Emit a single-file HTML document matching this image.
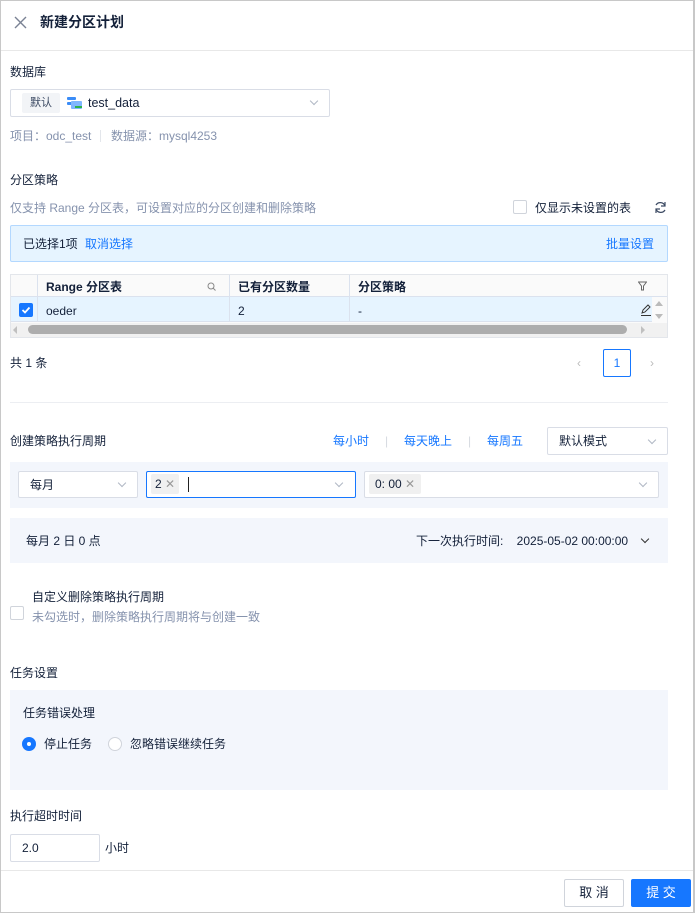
<!DOCTYPE html>
<html><head><meta charset="utf-8"><style>
*{box-sizing:border-box;margin:0;padding:0}
body{width:695px;height:913px;position:relative;background:#fff;font-family:"Liberation Sans","Noto Sans CJK SC",sans-serif;font-size:12px;color:#132039;overflow:hidden}
.a{position:absolute;white-space:nowrap;line-height:16px}
.g{color:#8592ad}
.b{color:#1677ff}
.box{position:absolute;border:1px solid #d9dde6;background:#fff;border-radius:2px}
.chev{position:absolute;width:6px;height:6px;border-right:1px solid #b0b7c4;border-bottom:1px solid #b0b7c4;transform:rotate(45deg)}
.tag{position:absolute;background:#f0f0f0;border-radius:2px;padding:0 4px;line-height:20px;height:20px}
</style></head><body>
<div style="position:absolute;inset:0;border:1px solid #c8c8c8;border-right:2px solid #c8c8c8;pointer-events:none;z-index:9"></div>
<svg class="a" style="left:14px;top:16px" width="13" height="13" viewBox="0 0 13 13"><path d="M1 1L12 12M12 1L1 12" stroke="#7a8294" stroke-width="1.4"/></svg>
<div class="a" style="left:40px;top:14px;font-size:14px;font-weight:bold">新建分区计划</div>
<div style="position:absolute;left:0;top:50px;width:695px;border-top:1px solid #e8e8e8"></div>

<div class="a" style="left:10px;top:64px">数据库</div>
<div class="box" style="left:10px;top:89px;width:320px;height:28px"></div>
<div class="tag" style="left:22px;top:93px;background:#f2f4f7;color:#3c4a63;font-size:11px;padding:0 8px">默认</div>
<svg class="a" style="left:67px;top:96px" width="16" height="14" viewBox="0 0 16 14"><rect x="0" y="1" width="9" height="3" rx="1" fill="#3b8cf7"/><rect x="0" y="6" width="6" height="3" rx="1" fill="#3b8cf7"/><rect x="4" y="5" width="11" height="8" rx="1" fill="#7fb6ff"/><rect x="8" y="10" width="7" height="2" fill="#2bb24c"/></svg>
<div class="a" style="left:88px;top:95px;font-size:12.5px">test_data</div>
<div class="chev" style="left:311px;top:98px"></div>
<div class="a g" style="left:10px;top:128px">项目：odc_test</div>
<div style="position:absolute;left:100px;top:130px;height:12px;border-left:1px solid #e3e6eb"></div>
<div class="a g" style="left:111px;top:128px">数据源：mysql4253</div>

<div class="a" style="left:10px;top:172px">分区策略</div>
<div class="a g" style="left:10px;top:200px">仅支持 Range 分区表，可设置对应的分区创建和删除策略</div>
<div style="position:absolute;left:513px;top:200px;width:14px;height:14px;border:1px solid #d0d4db;border-radius:2px"></div>
<div class="a" style="left:535px;top:200px">仅显示未设置的表</div>
<svg class="a" style="left:654px;top:201px" width="13" height="13" viewBox="0 0 13 13"><path d="M11 5A5 5 0 0 0 2 4M2 8A5 5 0 0 0 11 9" fill="none" stroke="#3c4a63" stroke-width="1.2"/><path d="M11 1V5H7M2 12V8H6" fill="none" stroke="#3c4a63" stroke-width="1.2"/></svg>

<div style="position:absolute;left:10px;top:225px;width:658px;height:37px;background:#e6f4ff;border:1px solid #b3d8ff;border-radius:2px"></div>
<div class="a" style="left:23px;top:236px">已选择1项</div>
<div class="a b" style="left:85px;top:236px">取消选择</div>
<div class="a b" style="left:606px;top:236px">批量设置</div>

<div style="position:absolute;left:10px;top:274px;width:658px;height:64px;border:1px solid #e3e6eb;background:#fafafa"></div>
<div style="position:absolute;left:11px;top:275px;width:656px;height:22px;background:#fafafa;border-bottom:1px solid #dbe2ee"></div>
<div style="position:absolute;left:11px;top:297px;width:641px;height:25px;background:#e6f4ff;border-bottom:1px solid #dbe2ee"></div>
<div style="position:absolute;left:37px;top:275px;height:47px;border-left:1px solid #dbe2ee"></div>
<div style="position:absolute;left:229px;top:275px;height:47px;border-left:1px solid #dbe2ee"></div>
<div style="position:absolute;left:349px;top:275px;height:47px;border-left:1px solid #dbe2ee"></div>
<div class="a" style="left:46px;top:279px;font-weight:bold">Range 分区表</div>
<svg class="a" style="left:207px;top:282px" width="9" height="9" viewBox="0 0 9 9"><circle cx="4" cy="4" r="3" fill="none" stroke="#888" stroke-width="1"/><path d="M6 6L8.5 8.5" stroke="#888"/></svg>
<div class="a" style="left:238px;top:279px;font-weight:bold">已有分区数量</div>
<div class="a" style="left:358px;top:279px;font-weight:bold">分区策略</div>
<svg class="a" style="left:638px;top:281px" width="9" height="10" viewBox="0 0 9 10"><path d="M0.5 1H8.5L5.5 5V9H3.5V5Z" fill="none" stroke="#666"/></svg>
<div style="position:absolute;left:19px;top:303px;width:14px;height:14px;background:#1677ff;border-radius:2px"></div>
<svg class="a" style="left:19px;top:303px" width="14" height="14" viewBox="0 0 14 14"><path d="M3.5 7L6 9.5L10.5 4.5" fill="none" stroke="#fff" stroke-width="1.8"/></svg>
<div class="a" style="left:46px;top:303px">oeder</div>
<div class="a" style="left:238px;top:303px">2</div>
<div class="a" style="left:358px;top:303px">-</div>
<svg class="a" style="left:640px;top:304px" width="12" height="12" viewBox="0 0 12 12"><path d="M2 9L3 6L8 1L10 3L5 8Z" fill="none" stroke="#333"/><path d="M1 11.5H11" stroke="#333"/></svg>
<div style="position:absolute;left:655px;top:301px;border:4px solid transparent;border-bottom:5px solid #bbb;border-top:0"></div>
<div style="position:absolute;left:655px;top:314px;border:4px solid transparent;border-top:5px solid #bbb;border-bottom:0"></div>
<div style="position:absolute;left:11px;top:323px;width:656px;height:14px;background:#f1f1f1"></div>
<div style="position:absolute;left:13px;top:326px;border:4px solid transparent;border-right:4px solid #c0c0c0;border-left:0"></div>
<div style="position:absolute;left:641px;top:326px;border:4px solid transparent;border-left:4px solid #c0c0c0;border-right:0"></div>
<div style="position:absolute;left:28px;top:325px;width:599px;height:9px;border-radius:5px;background:#adadad"></div>

<div class="a" style="left:10px;top:355px">共 1 条</div>
<div class="a" style="left:577px;top:355px;color:#bbb">‹</div>
<div style="position:absolute;left:603px;top:349px;width:28px;height:28px;border:1px solid #1677ff;border-radius:2px;color:#1677ff;text-align:center;line-height:26px">1</div>
<div class="a" style="left:650px;top:355px;color:#bbb">›</div>
<div style="position:absolute;left:10px;top:402px;width:658px;border-top:1px solid #eceef2"></div>

<div class="a" style="left:10px;top:433px">创建策略执行周期</div>
<div class="a b" style="left:333px;top:433px">每小时</div>
<div class="a" style="left:385px;top:433px;color:#d6dae0">|</div>
<div class="a b" style="left:404px;top:433px">每天晚上</div>
<div class="a" style="left:468px;top:433px;color:#d6dae0">|</div>
<div class="a b" style="left:487px;top:433px">每周五</div>
<div class="box" style="left:547px;top:427px;width:121px;height:28px"></div>
<div class="a" style="left:559px;top:433px">默认模式</div>
<div class="chev" style="left:649px;top:437px"></div>

<div style="position:absolute;left:10px;top:462px;width:658px;height:46px;background:#f3f6fc"></div>
<div class="box" style="left:18px;top:471px;width:120px;height:27px"></div>
<div class="a" style="left:30px;top:477px">每月</div>
<div class="chev" style="left:119px;top:480px"></div>
<div class="box" style="left:146px;top:471px;width:210px;height:27px;border-color:#1677ff"></div>
<div class="tag" style="left:151px;top:474px">2 <span style="color:#999">✕</span></div>
<div style="position:absolute;left:188px;top:477px;height:15px;border-left:1px solid #222"></div>
<div class="chev" style="left:336px;top:480px"></div>
<div class="box" style="left:364px;top:471px;width:295px;height:27px"></div>
<div class="tag" style="left:369px;top:474px;padding:0 6px">0: 00 <span style="color:#999">✕</span></div>
<div class="chev" style="left:640px;top:480px"></div>

<div style="position:absolute;left:10px;top:518px;width:658px;height:45px;background:#f3f6fc"></div>
<div class="a" style="left:26px;top:533px">每月 2 日 0 点</div>
<div class="a" style="left:416px;top:533px">下一次执行时间:&nbsp;&nbsp;&nbsp; 2025-05-02 00:00:00</div>
<div class="chev" style="left:642px;top:536px;border-color:#333"></div>

<div style="position:absolute;left:10px;top:606px;width:14px;height:14px;border:1px solid #d0d4db;border-radius:2px"></div>
<div class="a" style="left:32px;top:589px">自定义删除策略执行周期</div>
<div class="a g" style="left:32px;top:609px">未勾选时，删除策略执行周期将与创建一致</div>

<div class="a" style="left:10px;top:665px">任务设置</div>
<div style="position:absolute;left:10px;top:690px;width:658px;height:100px;background:#f3f6fc"></div>
<div class="a" style="left:23px;top:705px">任务错误处理</div>
<div style="position:absolute;left:22px;top:737px;width:14px;height:14px;border-radius:50%;background:#1677ff"></div>
<div style="position:absolute;left:27px;top:742px;width:4px;height:4px;border-radius:50%;background:#fff"></div>
<div class="a" style="left:44px;top:736px">停止任务</div>
<div style="position:absolute;left:108px;top:737px;width:14px;height:14px;border-radius:50%;border:1px solid #d0d4db;background:#fff"></div>
<div class="a" style="left:130px;top:736px">忽略错误继续任务</div>

<div class="a" style="left:10px;top:808px">执行超时时间</div>
<div class="box" style="left:10px;top:834px;width:90px;height:28px"></div>
<div class="a" style="left:22px;top:840px">2.0</div>
<div class="a" style="left:105px;top:840px">小时</div>

<div style="position:absolute;left:0;top:870px;width:695px;border-top:1px solid #e8e8e8"></div>
<div style="position:absolute;left:564px;top:879px;width:60px;height:28px;border:1px solid #d0d4db;border-radius:2px;text-align:center;line-height:26px;font-size:13px">取 消</div>
<div style="position:absolute;left:631px;top:879px;width:60px;height:28px;background:#1677ff;color:#fff;border-radius:2px;text-align:center;line-height:28px;font-size:13px">提 交</div>
</body></html>
